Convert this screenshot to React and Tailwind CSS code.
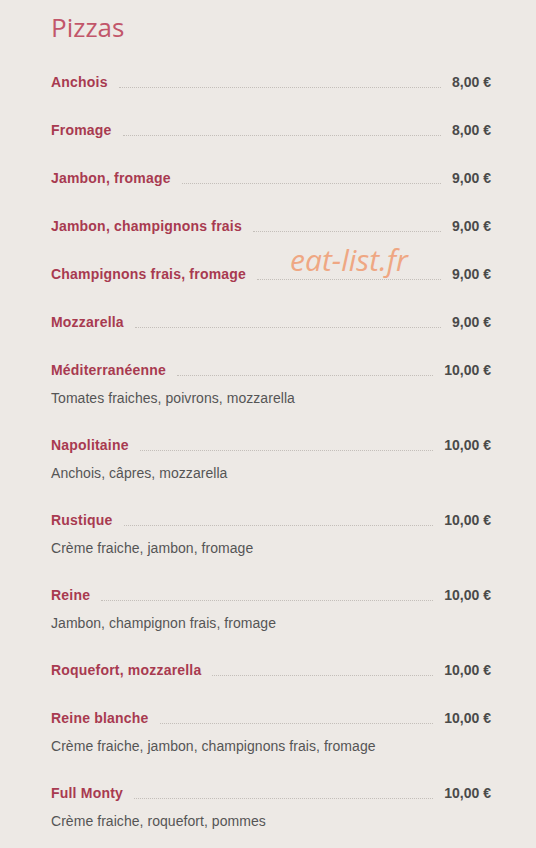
import React from 'react';

const pizzas = [
  { name: 'Anchois', price: '8,00 €' },
  { name: 'Fromage', price: '8,00 €' },
  { name: 'Jambon, fromage', price: '9,00 €' },
  { name: 'Jambon, champignons frais', price: '9,00 €' },
  { name: 'Champignons frais, fromage', price: '9,00 €' },
  { name: 'Mozzarella', price: '9,00 €' },
  { name: 'Méditerranéenne', price: '10,00 €', desc: 'Tomates fraiches, poivrons, mozzarella' },
  { name: 'Napolitaine', price: '10,00 €', desc: 'Anchois, câpres, mozzarella' },
  { name: 'Rustique', price: '10,00 €', desc: 'Crème fraiche, jambon, fromage' },
  { name: 'Reine', price: '10,00 €', desc: 'Jambon, champignon frais, fromage' },
  { name: 'Roquefort, mozzarella', price: '10,00 €' },
  { name: 'Reine blanche', price: '10,00 €', desc: 'Crème fraiche, jambon, champignons frais, fromage' },
  { name: 'Full Monty', price: '10,00 €', desc: 'Crème fraiche, roquefort, pommes' },
];

const MenuItem = ({ item }) => (
  <div className={item.desc ? 'pb-[27px]' : 'pb-[28px]'}>
    <div className="flex items-baseline leading-[20px] text-[14px]">
      <span className="font-bold tracking-[0.2px] text-[#a83a50]">{item.name}</span>
      <div className="flex-1 mx-[11px] border-b border-dotted border-[#c4bfba] translate-y-[1px]" />
      <span className="font-bold text-[#4a4a4a]">{item.price}</span>
    </div>
    {item.desc && (
      <p className="mt-2 leading-[20px] text-[14px] tracking-[0.05px] text-[#555]">{item.desc}</p>
    )}
  </div>
);

const App = () => {
  return (
    <div
      className="relative bg-[#ede9e5] min-h-screen pt-[9px] pl-[51px] pr-[45px] overflow-hidden"
      style={{ fontFamily: '"Liberation Sans", Arial, sans-serif' }}
    >
      <h1
        className="text-[26px] leading-[36px] text-[#c2566a] mb-[27px]"
        style={{ fontFamily: '"Open Sans", sans-serif' }}
      >
        Pizzas
      </h1>
      <div>
        {pizzas.map((item) => (
          <MenuItem key={item.name} item={item} />
        ))}
      </div>
      <div
        className="absolute left-[290px] top-[245px] text-[30px] leading-[30px] italic text-[#efa783]"
        style={{ fontFamily: '"Open Sans", sans-serif' }}
      >
        eat-list.fr
      </div>
    </div>
  );
};

export default App;
